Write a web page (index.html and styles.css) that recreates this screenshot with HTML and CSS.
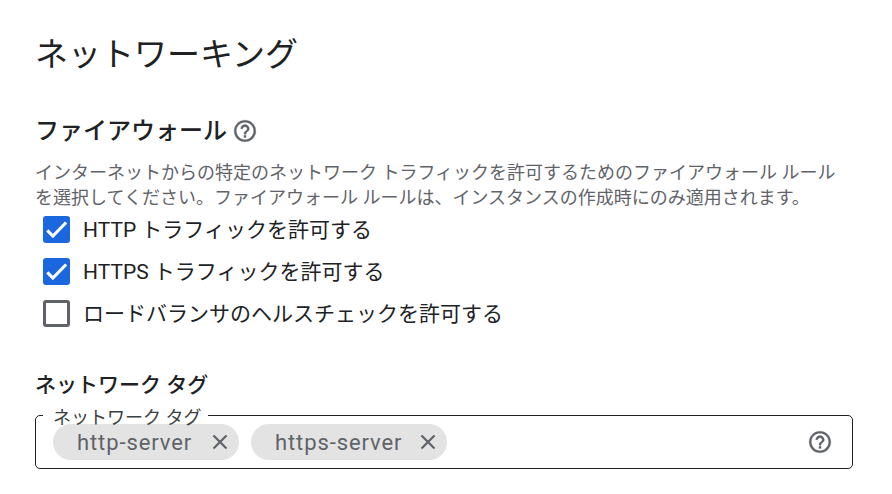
FILE: index.html
```
<!DOCTYPE html>
<html lang="ja">
<head>
<meta charset="utf-8">
<title>ネットワーキング</title>
<link rel="stylesheet" href="styles.css">
</head>
<body>
<main class="page">
  <h1 class="title">ネットワーキング</h1>
  <h2 class="section-head">ファイアウォール
    <svg class="help" viewBox="0 0 24 24"><path d="M11 18h2v-2h-2v2zm1-16C6.480 2 2 6.480 2 12s4.480 10 10 10 10-4.480 10-10S17.520 2 12 2zm0 18c-4.410 0-8-3.590-8-8s3.590-8 8-8 8 3.590 8 8-3.590 8-8 8zm0-14c-2.210 0-4 1.790-4 4h2c0-1.100.9-2 2-2s2 .9 2 2c0 2-3 1.750-3 5h2c0-2.250 3-2.500 3-5 0-2.210-1.790-4-4-4z"/></svg>
  </h2>
  <p class="desc">インターネットからの特定のネットワーク トラフィックを許可するためのファイアウォール ルール<br>を選択してください。ファイアウォール ルールは、インスタンスの作成時にのみ適用されます。</p>
  <div class="checks">
    <label class="check"><span class="box on"><svg viewBox="0 0 24 24"><path d="M3.800 12.800l5 5L20.500 5.800"/></svg></span>HTTP トラフィックを許可する</label>
    <label class="check"><span class="box on"><svg viewBox="0 0 24 24"><path d="M3.800 12.800l5 5L20.500 5.800"/></svg></span>HTTPS トラフィックを許可する</label>
    <label class="check"><span class="box"></span>ロードバランサのヘルスチェックを許可する</label>
  </div>
  <h2 class="tag-head">ネットワーク タグ</h2>
  <div class="field">
    <span class="chip">http-server<svg class="x" viewBox="0 0 24 24"><path d="M5.500 5.500l13 13M18.500 5.500l-13 13"/></svg></span>
    <span class="chip">https-server<svg class="x" viewBox="0 0 24 24"><path d="M5.500 5.500l13 13M18.500 5.500l-13 13"/></svg></span>
    <svg class="help field-help" viewBox="0 0 24 24"><path d="M11 18h2v-2h-2v2zm1-16C6.480 2 2 6.480 2 12s4.480 10 10 10 10-4.480 10-10S17.520 2 12 2zm0 18c-4.410 0-8-3.590-8-8s3.590-8 8-8 8 3.590 8 8-3.590 8-8 8zm0-14c-2.210 0-4 1.790-4 4h2c0-1.100.9-2 2-2s2 .9 2 2c0 2-3 1.750-3 5h2c0-2.250 3-2.500 3-5 0-2.210-1.790-4-4-4z"/></svg>
    <span class="legend">ネットワーク タグ</span>
  </div>
</main>
</body>
</html>
```
FILE: styles.css
```
* { box-sizing: border-box; }
html, body { margin: 0; padding: 0; background: #fff; }
body {
  width: 892px;
  height: 494px;
  overflow: hidden;
  font-family: Roboto, "Noto Sans CJK JP", sans-serif;
  color: #202124;
}
.page { padding: 32px 39px 0 35px; }
.title {
  margin: 0;
  font-size: 33px;
  line-height: 46px;
  font-weight: 400;
}
.section-head {
  display: flex;
  align-items: center;
  gap: 5px;
  margin: 37px 0 0;
  font-size: 24px;
  line-height: 32px;
  font-weight: 500;
  height: 32px;
}
.help { width: 26px; height: 26px; fill: #5f6368; stroke: #5f6368; stroke-width: 0.25; flex: none; }
.desc {
  margin: 13px 0 0;
  font-size: 18px;
  line-height: 25px;
  color: #5f6368;
  white-space: nowrap;
}
.checks { display: flex; flex-direction: column; margin-top: -2px; }
.check {
  display: flex;
  align-items: center;
  gap: 13px;
  height: 42px;
  padding: 0 0 2px 8px;
  font-size: 21px;
}
.box {
  width: 27px;
  height: 27px;
  margin-top: 2px;
  border: 3px solid #5f6368;
  border-radius: 3px;
  flex: none;
  display: flex;
}
.box.on { background: #1a67e0; border-color: #1a67e0; }
.box svg {
  width: 27px;
  height: 27px;
  margin: -3px;
  fill: none;
  stroke: #fff;
  stroke-width: 2.8;
}
.tag-head {
  margin: 35px 0 0;
  font-size: 21px;
  line-height: 32px;
  font-weight: 500;
}
.field {
  position: relative;
  display: flex;
  align-items: center;
  gap: 12px;
  width: 818px;
  height: 54px;
  margin: 14px 0 0 0;
  padding: 0 19px 0 17px;
  border: 1.5px solid #202124;
  border-radius: 5px;
}
.legend {
  position: absolute;
  left: 7px;
  top: -7px;
  padding: 0 7px 0 10px;
  background: linear-gradient(#fff 10px, transparent 10px);
  font-size: 18px;
  line-height: 18px;
  color: #3c4043;
  white-space: nowrap;
}
.chip {
  display: flex;
  align-items: center;
  justify-content: space-between;
  height: 36px;
  width: 186px;
  padding: 0 7px 0 24px;
  background: #e3e3e3;
  border-radius: 18px;
  font-size: 22px;
  letter-spacing: 0.9px;
  font-weight: 400;
  color: #5f6368;
}
.chip + .chip { width: 196px; }
.x { width: 24px; height: 24px; fill: none; stroke: #5f6368; stroke-width: 2.2; }
.field-help { margin-left: auto; }
```
